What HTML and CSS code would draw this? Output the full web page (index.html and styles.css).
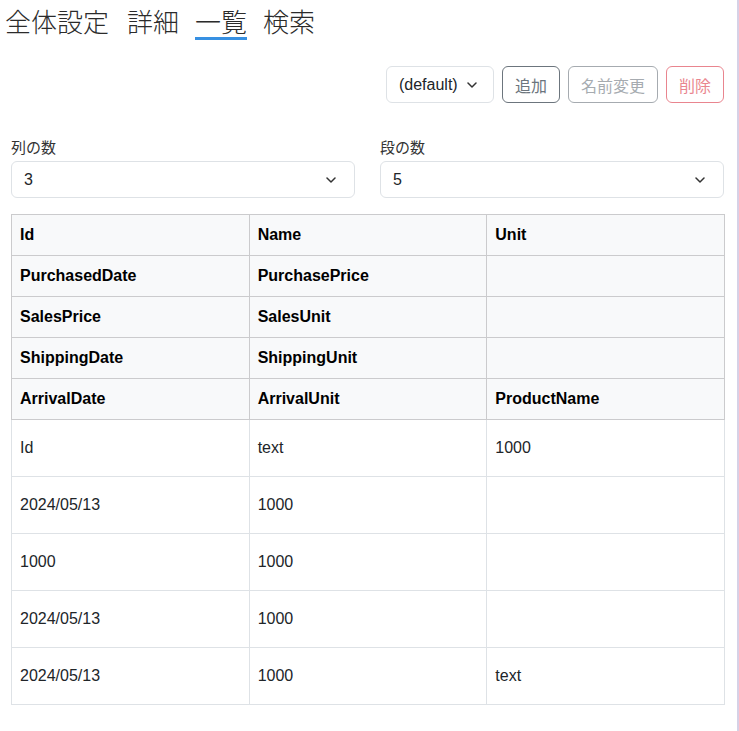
FILE: index.html
```html
<!DOCTYPE html>
<html lang="ja">
<head>
<meta charset="utf-8">
<title>一覧</title>
<link rel="stylesheet" href="styles.css">
</head>
<body>
<div class="page">
  <nav class="tabs">
    <span class="tab">全体設定</span>
    <span class="tab">詳細</span>
    <span class="tab active">一覧</span>
    <span class="tab">検索</span>
  </nav>

  <div class="toolbar">
    <div class="select small">
      <span>(default)</span>
      <svg class="chev" width="10" height="6" viewBox="0 0 10 6"><path d="M1 1l4 4 4-4" fill="none" stroke="#333" stroke-width="1.5" stroke-linecap="round" stroke-linejoin="round"/></svg>
    </div>
    <button class="btn btn-secondary">追加</button>
    <button class="btn btn-secondary disabled">名前変更</button>
    <button class="btn btn-danger disabled">削除</button>
  </div>

  <div class="fields">
    <div class="field">
      <label class="label">列の数</label>
      <div class="select">
        <span>3</span>
        <svg class="chev" width="10" height="6" viewBox="0 0 10 6"><path d="M1 1l4 4 4-4" fill="none" stroke="#333" stroke-width="1.5" stroke-linecap="round" stroke-linejoin="round"/></svg>
      </div>
    </div>
    <div class="field">
      <label class="label">段の数</label>
      <div class="select">
        <span>5</span>
        <svg class="chev" width="10" height="6" viewBox="0 0 10 6"><path d="M1 1l4 4 4-4" fill="none" stroke="#333" stroke-width="1.5" stroke-linecap="round" stroke-linejoin="round"/></svg>
      </div>
    </div>
  </div>

  <table class="grid">
    <thead>
      <tr><th>Id</th><th>Name</th><th>Unit</th></tr>
      <tr><th>PurchasedDate</th><th>PurchasePrice</th><th></th></tr>
      <tr><th>SalesPrice</th><th>SalesUnit</th><th></th></tr>
      <tr><th>ShippingDate</th><th>ShippingUnit</th><th></th></tr>
      <tr><th>ArrivalDate</th><th>ArrivalUnit</th><th>ProductName</th></tr>
    </thead>
    <tbody>
      <tr><td>Id</td><td>text</td><td>1000</td></tr>
      <tr><td>2024/05/13</td><td>1000</td><td></td></tr>
      <tr><td>1000</td><td>1000</td><td></td></tr>
      <tr><td>2024/05/13</td><td>1000</td><td></td></tr>
      <tr><td>2024/05/13</td><td>1000</td><td>text</td></tr>
    </tbody>
  </table>
</div>
</body>
</html>
```

FILE: styles.css
```css
html, body {
  margin: 0;
  padding: 0;
  background: #fff;
}

body {
  font-family: "Liberation Sans", "Noto Sans CJK JP", sans-serif;
  font-size: 16px;
  color: #212529;
}

.page {
  width: 739px;
  min-height: 731px;
  box-sizing: border-box;
  padding: 0 13px 0 11px;
  border-right: 2px solid #d6d1e6;
}

.tabs {
  display: flex;
  gap: 16px;
  margin-left: -6px;
  font-family: "Noto Sans CJK JP", sans-serif;
  font-weight: 300;
  font-size: 26px;
}

.tab {
  padding-top: 4px;
  line-height: 33px;
  color: #2b2b2b;
  border-bottom: 3px solid transparent;
}

.tab:first-child {
  margin-right: 2px;
}

.tab.active {
  border-bottom-color: #3790e2;
}

.toolbar {
  display: flex;
  justify-content: flex-end;
  gap: 8px;
  margin-top: 26px;
}

.select {
  display: flex;
  align-items: center;
  justify-content: space-between;
  height: 37px;
  box-sizing: border-box;
  padding: 0 18px 0 12px;
  border: 1px solid #dee2e6;
  border-radius: 6px;
  background: #fff;
  font-size: 16px;
  color: #212529;
}

.select.small {
  width: 108px;
  padding-right: 16px;
}

.chev {
  display: block;
}

.btn {
  height: 37px;
  box-sizing: border-box;
  padding: 0 12px;
  border-radius: 6px;
  background: #fff;
  font-family: "Noto Sans CJK JP", sans-serif;
  font-size: 16px;
  line-height: 1;
}

.btn-secondary {
  border: 1px solid #6c757d;
  color: #6c757d;
}

.btn-danger {
  border: 1px solid #dc3545;
  color: #dc3545;
}

.btn.disabled {
  opacity: 0.6;
}

.fields {
  display: grid;
  grid-template-columns: 1fr 1fr;
  column-gap: 25px;
  margin-top: 33px;
}

.label {
  display: block;
  font-family: "Noto Sans CJK JP", sans-serif;
  font-size: 15px;
  line-height: 22px;
  margin-bottom: 3px;
  color: #333;
}

.grid {
  width: 714px;
  margin-top: 16px;
  border-collapse: collapse;
  table-layout: fixed;
}

.grid th {
  background: #f8f9fa;
  border: 1px solid #cbcbcd;
  padding: 8px;
  line-height: 24px;
  text-align: left;
  font-weight: bold;
  color: #000;
}

.grid td {
  border: 1px solid #dee2e6;
  padding: 16px 8px;
  line-height: 24px;
  color: #212529;
}
```
